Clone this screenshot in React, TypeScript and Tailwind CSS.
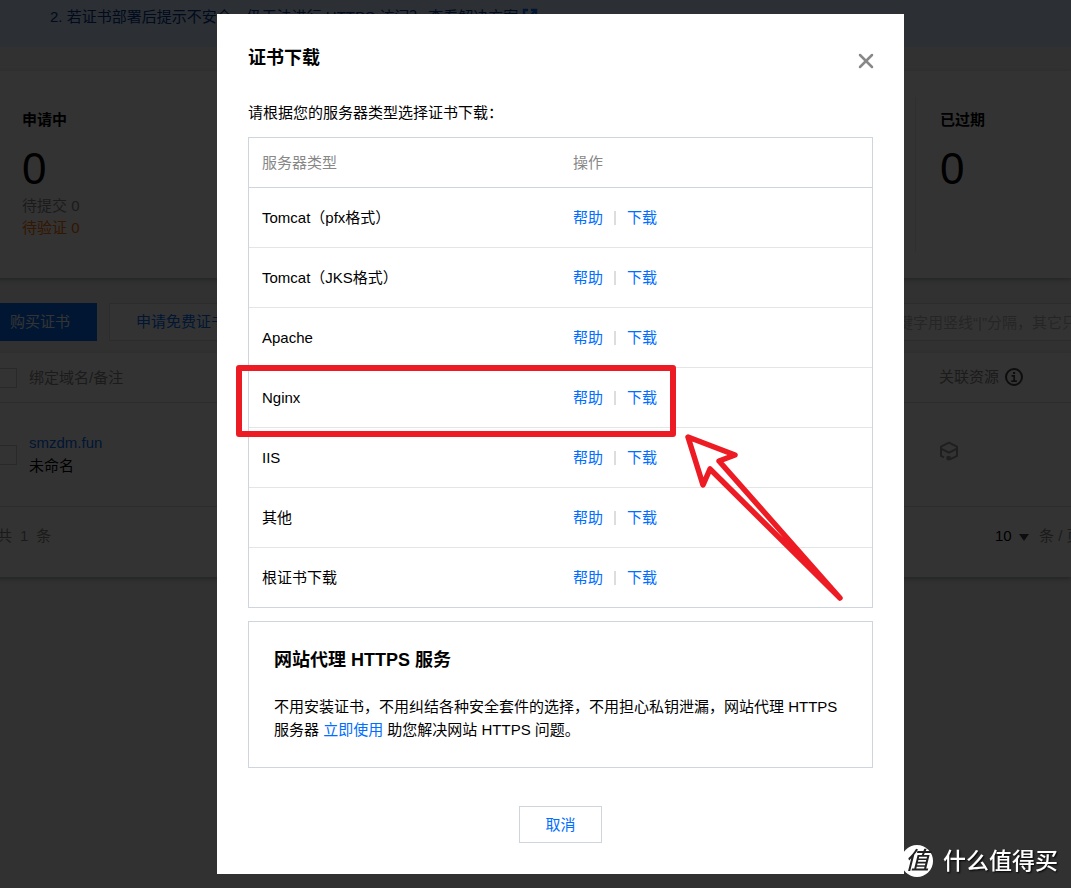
import { useState } from 'react';
import { X } from 'lucide-react';

interface ServerType {
  id: string;
  name: string;
}

const serverTypes: ServerType[] = [
  { id: 'pfx', name: 'Tomcat（pfx格式）' },
  { id: 'jks', name: 'Tomcat（JKS格式）' },
  { id: 'apache', name: 'Apache' },
  { id: 'nginx', name: 'Nginx' },
  { id: 'iis', name: 'IIS' },
  { id: 'other', name: '其他' },
  { id: 'root', name: '根证书下载' },
];

function ExternalIcon() {
  return (
    <svg viewBox="0 0 16 16" className="inline-block w-4 h-4 ml-1 align-[-2px]" fill="none" stroke="#006eff" strokeWidth="2.4">
      <path d="M6 2H2v12h12v-4" />
      <path d="M9 2h5v5M14 2L7 9" />
    </svg>
  );
}

function InfoIcon() {
  return (
    <svg viewBox="0 0 18 18" className="w-[18px] h-[18px]" fill="none" stroke="#444" strokeWidth="2">
      <circle cx="9" cy="9" r="8" />
      <path d="M6.5 7.8h2.7v5.4M6.3 13.2h5.6" strokeWidth="1.7" />
      <path d="M8 5h2.2" />
    </svg>
  );
}

function CubeIcon() {
  return (
    <svg viewBox="0 0 20 20" className="w-5 h-5" fill="none" stroke="#999" strokeWidth="2">
      <path d="M5 16.4L2 14.8V5.6L10 1.6l8 4v9.2l-7 3.6" />
      <path d="M2 7.6l8 4 8-4" />
      <circle cx="9.6" cy="17.2" r="1.4" fill="#999" />
    </svg>
  );
}

function CertificatePage() {
  return (
    <div className="-ml-[17px] pb-4 overflow-hidden">
      {/* Notice */}
      <div className="bg-[#dcebff] text-[#003797] pt-[5px] pb-[19px] pl-[67px] whitespace-nowrap">
        2. 若证书部署后提示不安全，仍无法进行 HTTPS 访问？{' '}
        <a href="#solution">
          查看解决方案
          <ExternalIcon />
        </a>
      </div>

      {/* Stats */}
      <section className="mt-6 bg-white flex justify-between h-[207px] py-[26px] pl-[39px] shadow-[0_2px_4px_rgba(54,58,80,0.32)]">
        <div className="pt-[11px]">
          <h3 className="font-bold">申请中</h3>
          <p className="mt-3 text-[44px] leading-[52px]">0</p>
          <p className="text-[#888] leading-[22px]">待提交 0</p>
          <p className="text-[#ff7200] leading-[22px]">待验证 0</p>
        </div>
        <div className="w-[156px] border-l border-[#e8e8e8] pt-[11px] pl-6">
          <h3 className="font-bold">已过期</h3>
          <p className="mt-3 text-[44px] leading-[52px]">0</p>
        </div>
      </section>

      {/* Actions */}
      <div className="mt-[25px] flex gap-3 h-[38px]">
        <button className="bg-[#006eff] text-white px-[27px] pb-[2px]">购买证书</button>
        <button className="bg-white text-[#006eff] border border-[#ddd] px-[26px] pb-[2px]">申请免费证书</button>
        <input
          type="text"
          aria-label="搜索证书"
          placeholder="多个关键字用竖线“|”分隔，其它只能用回车键分隔"
          className="ml-auto w-[231px] bg-white border border-r-0 border-[#ddd] pl-3 placeholder:text-[#bbb]"
        />
      </div>

      {/* Certificates */}
      <section className="mt-3 bg-white shadow-[0_2px_4px_rgba(54,58,80,0.32)]">
        <table className="w-full table-fixed border-separate border-spacing-0 text-left">
          <thead>
            <tr className="h-[50px] text-[#888]">
              <th className="w-[46px] border-b border-[#ddd] pl-[14px]">
                <input type="checkbox" aria-label="全选" className="block appearance-none w-5 h-5 border border-[#ccc]" />
              </th>
              <th className="border-b border-[#ddd] font-normal">绑定域名/备注</th>
              <th className="w-[132px] border-b border-[#ddd] pb-[2px] font-normal">
                <span className="flex items-center gap-[6px]">
                  关联资源
                  <InfoIcon />
                </span>
              </th>
            </tr>
          </thead>
          <tbody>
            <tr className="h-[104px]">
              <td className="border-b border-[#ddd] pl-[14px]">
                <input type="checkbox" aria-label="smzdm.fun" className="block appearance-none w-5 h-5 border border-[#ccc]" />
              </td>
              <td className="border-b border-[#ddd] pb-[2px]">
                <a href="#cert" className="text-[#006eff]">smzdm.fun</a>
                <p>未命名</p>
              </td>
              <td className="border-b border-[#ddd] pb-2">
                <CubeIcon />
              </td>
            </tr>
          </tbody>
        </table>
        <div className="h-[70px] flex justify-between pl-[14px] pt-[17px] text-[#888]">
          <p className="flex gap-2">
            <span>共</span>
            <span>1</span>
            <span>条</span>
          </p>
          <div className="flex w-[76px] overflow-hidden whitespace-nowrap">
            <div className="relative shrink-0 h-[23px] mr-[10px]">
              <select aria-label="每页条数" className="appearance-none w-[34px] h-[23px] text-black">
                <option>10</option>
                <option>20</option>
              </select>
              <svg viewBox="0 0 10 7" className="absolute right-0 top-[10px] w-[10px] h-[7px] pointer-events-none" fill="#444">
                <path d="M0 0h10L5 7z" />
              </svg>
            </div>
            条 / 页
          </div>
        </div>
      </section>
    </div>
  );
}

// Red hand-drawn marks that point at the Nginx row
function Annotation() {
  return (
    <svg
      viewBox="0 0 687 860"
      className="absolute left-0 top-0 w-[687px] h-[860px] pointer-events-none"
      fill="none"
      stroke="#ed1c24"
      strokeLinejoin="round"
    >
      <rect x="22" y="354" width="434" height="66" strokeWidth="6" />
      <path d="M471 423L518 441L502 447L623 584L493 455L486 471Z" strokeWidth="5.5" />
    </svg>
  );
}

function DownloadDialog({ onClose }: { onClose: () => void }) {
  return (
    <div className="fixed inset-0 bg-black/80 flex justify-center items-start pt-[14px] pl-[50px] overflow-hidden">
      <div role="dialog" aria-labelledby="dialog-title" className="relative w-full max-w-[687px] bg-white px-[31px] pt-[30px] pb-[31px]">
        <div className="flex items-center justify-between h-7">
          <h2 id="dialog-title" className="text-[18px] leading-7 font-bold">证书下载</h2>
          <button aria-label="关闭" onClick={onClose} className="text-[#888] -mr-[5px] pt-[6px]">
            <X size={24} strokeWidth={2.5} />
          </button>
        </div>

        <p className="mt-[29px]">请根据您的服务器类型选择证书下载：</p>

        <table className="mt-[13px] w-full table-fixed border-separate border-spacing-0 border-x border-t border-[#cfd5de] text-left">
          <thead>
            <tr className="h-[50px] text-[#888]">
              <th className="w-[311px] border-b border-[#cfd5de] px-[13px] font-normal">服务器类型</th>
              <th className="border-b border-[#cfd5de] px-[13px] font-normal">操作</th>
            </tr>
          </thead>
          <tbody>
            {serverTypes.map((server, idx) => {
              const border = idx === serverTypes.length - 1 ? 'border-[#cfd5de]' : 'border-[#e5e5e5]';
              return (
                <tr key={server.id} className="h-[60px]">
                  <td className={`border-b px-[13px] ${border}`}>{server.name}</td>
                  <td className={`border-b px-[13px] ${border}`}>
                    <div className="flex items-center text-[#006eff]">
                      <a href={`#help-${server.id}`}>帮助</a>
                      <span className="w-[2px] h-[14px] bg-[#ddd] mx-[11px]" />
                      <a href={`#download-${server.id}`}>下载</a>
                    </div>
                  </td>
                </tr>
              );
            })}
          </tbody>
        </table>

        <section className="mt-[13px] border border-[#cfd5de] px-[25px] pt-6 pb-[26px]">
          <h3 className="text-[18px] leading-7 font-bold">网站代理 HTTPS 服务</h3>
          <p className="mt-[21px]">
            不用安装证书，不用纠结各种安全套件的选择，不用担心私钥泄漏，网站代理 HTTPS 服务器{' '}
            <a href="#proxy" className="text-[#006eff]">立即使用</a> 助您解决网站 HTTPS 问题。
          </p>
        </section>

        <div className="mt-[38px] flex justify-center">
          <button onClick={onClose} className="h-[37px] w-[83px] border border-[#cfd5de] text-[#006eff]">
            取消
          </button>
        </div>

        <Annotation />
      </div>
    </div>
  );
}

function Watermark() {
  return (
    <div className="fixed right-[13px] bottom-[11px] flex items-center gap-[10px] text-white">
      <span className="w-8 h-8 rounded-full bg-white text-[#222] text-[24px] leading-8 font-medium italic flex items-center justify-center">
        值
      </span>
      <span className="text-[23px] leading-8 font-medium [text-shadow:1px_1px_2px_#000]">什么值得买</span>
    </div>
  );
}

export default function App() {
  const [open, setOpen] = useState(true);

  return (
    <div
      lang="zh-CN"
      className="min-h-screen overflow-hidden bg-[#f2f2f2] text-black text-[15px] leading-[23px] font-['Liberation_Sans','Noto_Sans_CJK_SC',sans-serif]"
    >
      <CertificatePage />
      {open && <DownloadDialog onClose={() => setOpen(false)} />}
      <Watermark />
    </div>
  );
}
